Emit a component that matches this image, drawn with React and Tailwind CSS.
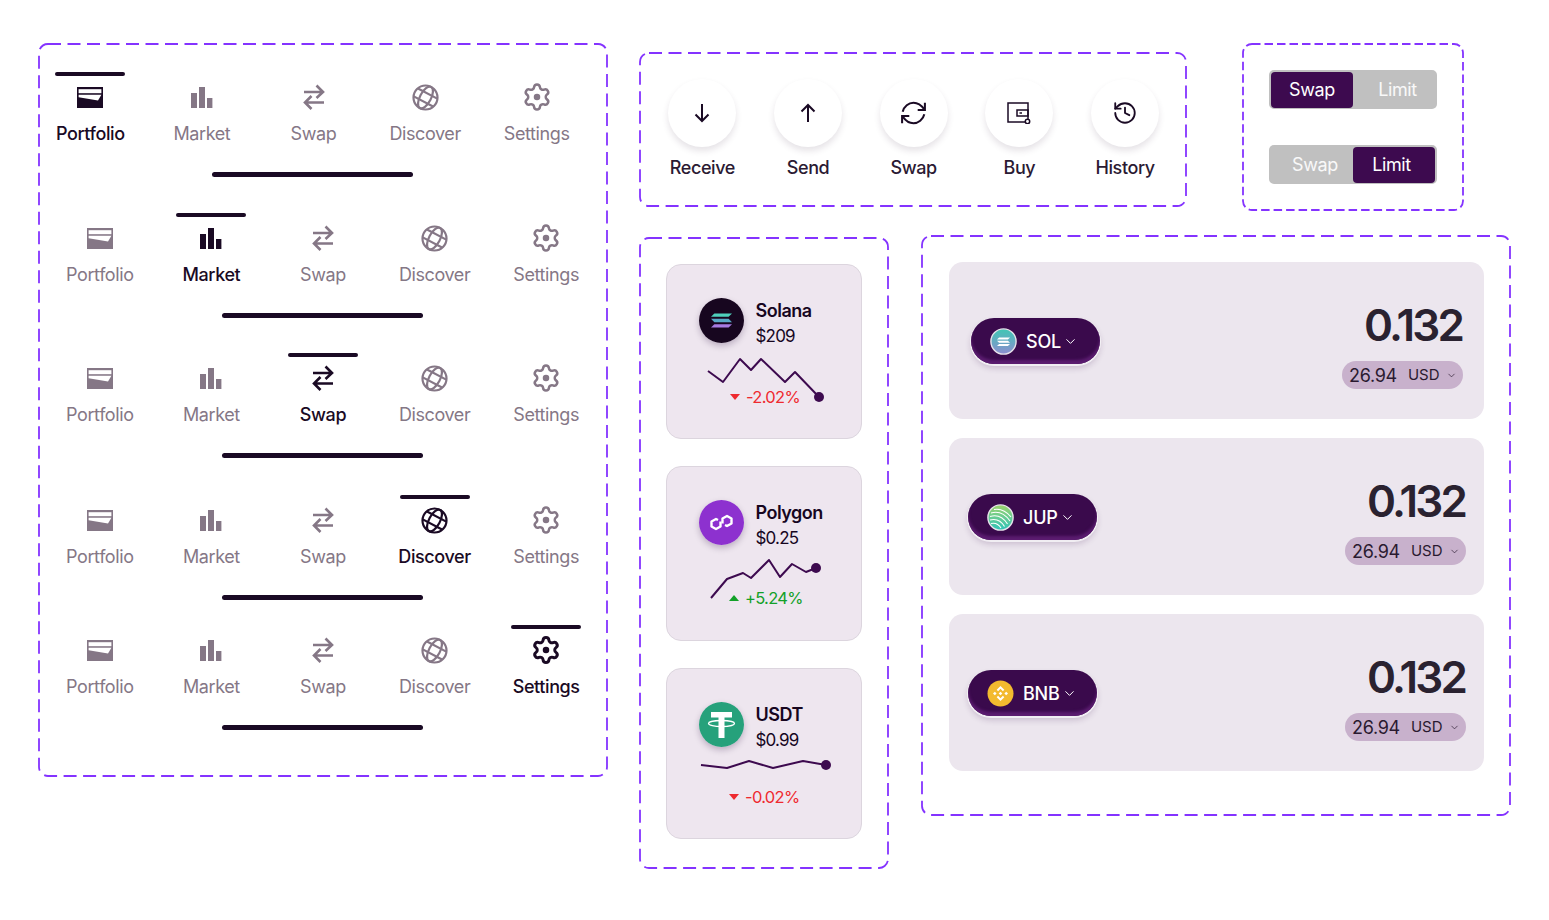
import React from "react";
import { History, ChevronDown } from "lucide-react";

const DARK = "#1a0a24";
const MUTED = "#857786";

function DashedBox({ className, dash = "13 6.5", children }) {
  return (
    <div className={`relative shrink-0 ${className}`}>
      <svg className="absolute inset-0 h-full w-full overflow-visible" fill="none">
        <rect
          x="0"
          y="0"
          width="100%"
          height="100%"
          rx="9"
          stroke="#8433ff"
          strokeWidth="1.8"
          strokeDasharray={dash}
        />
      </svg>
      {children}
    </div>
  );
}

function WalletIcon({ color }) {
  return (
    <svg width="26" height="21" viewBox="0 0 26 21">
      <rect width="26" height="21" fill={color} />
      <rect x="1.6" y="2.2" width="22.8" height="4" fill="#fff" />
      <path d="M1.6 7.8H24.4L21 13.4L1.6 10.2Z" fill="#fff" />
    </svg>
  );
}

function BarsIcon({ color }) {
  return (
    <svg width="22" height="21" viewBox="0 0 22 21" fill={color}>
      <rect x="0" y="6" width="6" height="15" />
      <rect x="8" y="0" width="6" height="21" />
      <rect x="16" y="11" width="5.4" height="10" />
    </svg>
  );
}

function SwapIcon({ color, width = 2.6 }) {
  return (
    <svg width="22" height="26" viewBox="0 0 22 26" fill="none" stroke={color} strokeWidth={width}>
      <path d="M1 8H20M13.5 1.5L20 8L13.5 14" />
      <path d="M21 18.5H2M8.5 12L2 18.5L8.5 25" />
    </svg>
  );
}

function GlobeIcon({ color, width = 2.2 }) {
  return (
    <svg width="27" height="27" viewBox="0 0 27 27" fill="none" stroke={color} strokeWidth={width}>
      <circle cx="13.5" cy="13.5" r="12" />
      <g transform="rotate(28 13.5 13.5)">
        <ellipse cx="13.5" cy="13.5" rx="5.5" ry="12" />
        <path d="M2.6 9H24.4M2.6 18H24.4" />
      </g>
    </svg>
  );
}

function GearIcon({ color }) {
  return (
    <svg
      width="30"
      height="30"
      viewBox="0 0 24 24"
      fill="none"
      stroke={color}
      strokeWidth={color === DARK ? 2.4 : 2}
    >
      <path d="M9.671 4.136a2.34 2.34 0 0 1 4.659 0 2.34 2.34 0 0 0 3.319 1.915 2.34 2.34 0 0 1 2.33 4.033 2.34 2.34 0 0 0 0 3.831 2.34 2.34 0 0 1-2.33 4.033 2.34 2.34 0 0 0-3.319 1.915 2.34 2.34 0 0 1-4.659 0 2.34 2.34 0 0 0-3.32-1.915 2.34 2.34 0 0 1-2.33-4.033 2.34 2.34 0 0 0 0-3.831A2.34 2.34 0 0 1 6.35 6.051a2.34 2.34 0 0 0 3.319-1.915" />
      <circle cx="12" cy="12" r="2.6" fill={color} stroke="none" />
    </svg>
  );
}

const TABS = [
  { label: "Portfolio", Icon: WalletIcon },
  { label: "Market", Icon: BarsIcon },
  { label: "Swap", Icon: SwapIcon },
  { label: "Discover", Icon: GlobeIcon },
  { label: "Settings", Icon: GearIcon },
];

function NavRow({ active, className }) {
  return (
    <div className={`flex w-[558px] flex-col items-center ${className}`}>
      <div className="flex pl-[2px]">
        {TABS.map((tab, i) => {
          const on = i === active;
          return (
            <div key={tab.label} className="flex w-[111.6px] flex-col items-center">
              <div className={`h-1 w-[70px] rounded-full ${on ? "bg-[#1a0a24]" : "bg-transparent"}`} />
              <div className="mt-[7px] flex h-[28px] items-center justify-center">
                <tab.Icon color={on ? DARK : MUTED} />
              </div>
              <span
                className={`mt-[11px] text-[18px] leading-[24px] tracking-[-0.4px] ${
                  on ? "font-medium text-[#1a0a24]" : "text-[#857786]"
                }`}
              >
                {tab.label}
              </span>
            </div>
          );
        })}
      </div>
      <div className="mt-[26px] h-[5px] w-[201px] rounded-full bg-[#1a0a24]" />
    </div>
  );
}

function ReceiveIcon() {
  return (
    <svg width="16" height="20" viewBox="0 0 16 20" fill="none" stroke={DARK} strokeWidth="2">
      <path d="M8 1V18M1.5 11.5L8 18L14.5 11.5" />
    </svg>
  );
}

function SendIcon() {
  return (
    <svg width="16" height="20" viewBox="0 0 16 20" fill="none" stroke={DARK} strokeWidth="2">
      <path d="M8 19V2M1.5 8.5L8 2L14.5 8.5" />
    </svg>
  );
}

function RefreshIcon() {
  return (
    <svg width="29" height="24" viewBox="0 0 24 20" fill="none" stroke={DARK} strokeWidth="1.7">
      <path d="M3 9C4 4.5 8 1.5 12 1.5C15.5 1.5 18.5 3.5 21 7" />
      <path d="M21.5 1.5V7.5H15.5" />
      <path d="M21 11C20 15.5 16 18.5 12 18.5C8.5 18.5 5.5 16.5 3 13" />
      <path d="M2.5 18.5V12.5H8.5" />
    </svg>
  );
}

function BuyIcon() {
  return (
    <svg width="24" height="22" viewBox="0 0 24 22" fill="none" stroke={DARK} strokeWidth="1.5">
      <rect x="1" y="1" width="20" height="19" />
      <rect x="10" y="8" width="11" height="6" />
      <path d="M12.5 11H15" />
      <circle cx="20.5" cy="19.5" r="2.2" fill="#fff" />
    </svg>
  );
}

const ACTIONS = [
  { label: "Receive", icon: <ReceiveIcon /> },
  { label: "Send", icon: <SendIcon /> },
  { label: "Swap", icon: <RefreshIcon /> },
  { label: "Buy", icon: <BuyIcon /> },
  { label: "History", icon: <History size={26} strokeWidth={1.7} color={DARK} /> },
];

function Toggle({ active }) {
  return (
    <div className="flex h-[39px] w-[168px] items-center rounded-[5px] bg-[#c0c0c0] px-[2px] text-[18px] tracking-[-0.4px]">
      {active === 0 ? (
        <>
          <div className="flex h-[36px] w-[82px] items-center justify-center rounded-[4px] bg-[#3d0a4f] text-white">
            Swap
          </div>
          <div className="flex-1 pl-[7px] text-center text-white/90">Limit</div>
        </>
      ) : (
        <>
          <div className="flex-1 pl-[6px] text-center text-white/90">Swap</div>
          <div className="flex h-[36px] w-[82px] items-center justify-center rounded-[4px] bg-[#3d0a4f] pr-[5px] text-white">
            Limit
          </div>
        </>
      )}
    </div>
  );
}

function SolanaStripes({ x, y, w, h, c1, c2, c3 }) {
  const s = h * 0.24;
  const row = (ty, fill, flip) => {
    const a = w * 0.16;
    return flip ? (
      <path d={`M${x + a} ${ty}H${x + w}L${x + w - a} ${ty + s}H${x}Z`} fill={fill} />
    ) : (
      <path d={`M${x} ${ty}H${x + w - a}L${x + w} ${ty + s}H${x + a}Z`} fill={fill} />
    );
  };
  return (
    <>
      {row(y, c1, true)}
      {row(y + h * 0.38, c2, false)}
      {row(y + h * 0.76, c3, true)}
    </>
  );
}

function SolanaLogo() {
  return (
    <svg width="45" height="45" viewBox="0 0 45 45">
      <circle cx="22.5" cy="22.5" r="22.5" fill="#17061f" />
      <SolanaStripes x={12} y={15.5} w={21} h={14} c1="#4fd0bc" c2="#58a9c6" c3="#a77be2" />
    </svg>
  );
}

function PolygonLogo() {
  return (
    <svg width="45" height="45" viewBox="0 0 45 45">
      <circle cx="22.5" cy="22.5" r="22.5" fill="#8d31cf" />
      <g fill="none" stroke="#fff" strokeWidth="2.4" strokeLinejoin="round">
        <path d="M21.5 21.5V26.5L17 29L12.5 26.5V21.5L17 19L19 20" />
        <path d="M23.5 23.5V18.5L28 16L32.5 18.5V23.5L28 26L26 25" />
      </g>
    </svg>
  );
}

function TetherLogo() {
  return (
    <svg width="45" height="45" viewBox="0 0 45 45">
      <circle cx="22.5" cy="22.5" r="22.5" fill="#26a17b" />
      <path d="M12 10H33V15.5H25.5V36H19.5V15.5H12Z" fill="#fff" />
      <ellipse cx="22.5" cy="21.5" rx="13" ry="3" fill="none" stroke="#fff" strokeWidth="1.3" />
    </svg>
  );
}

function Spark({ height, points, end, className }) {
  return (
    <svg className={`block -ml-[1.5px] ${className}`} width="196" height={height} viewBox={`0 0 196 ${height}`} fill="none">
      <polyline points={points} stroke="#3d0a4f" strokeWidth="2" strokeLinejoin="round" />
      <circle cx={end[0]} cy={end[1]} r="5" fill="#3d0a4f" />
    </svg>
  );
}

function Change({ value, up, className }) {
  return (
    <div
      className={`flex items-center text-[16.5px] leading-[22px] tracking-[-0.7px] ${
        up ? "text-[#12a028]" : "text-[#ee2a2f]"
      } ${className}`}
    >
      <svg width="10" height="6" viewBox="0 0 10 6" className="mr-[6px]" fill="currentColor">
        <path d={up ? "M5 0L10 6H0Z" : "M0 0H10L5 6Z"} />
      </svg>
      {value}
    </div>
  );
}

function CoinHead({ logo, name, price }) {
  return (
    <div className="flex items-start pl-[32px]">
      <div className="rounded-full shadow-[0_3px_6px_rgba(40,10,60,0.25)]">{logo}</div>
      <div className="ml-[11.5px] flex flex-col pt-[1px]">
        <span className="text-[18px] font-semibold leading-[24px] tracking-[-0.5px] text-[#17061f]">{name}</span>
        <span className="mt-[1px] text-[17px] leading-[24px] tracking-[-0.8px] text-[#17061f]">{price}</span>
      </div>
    </div>
  );
}

function CoinCard({ className, children }) {
  return (
    <div className={`w-[196px] rounded-[15px] border-[1.5px] border-[#dcd5de] bg-[#eee6ef] ${className}`}>
      {children}
    </div>
  );
}

function SolCoin() {
  return (
    <svg width="27" height="27" viewBox="0 0 27 27">
      <defs>
        <linearGradient id="solg" x1="0" y1="0" x2="0" y2="1">
          <stop offset="0" stopColor="#3fc7b4" />
          <stop offset="1" stopColor="#8d8ed0" />
        </linearGradient>
      </defs>
      <circle cx="13.5" cy="13.5" r="12.6" fill="url(#solg)" stroke="#e7e3ea" strokeWidth="1.4" />
      <SolanaStripes x={7} y={9.5} w={13} h={8.4} c1="#fff" c2="#fff" c3="#fff" />
    </svg>
  );
}

function JupCoin() {
  return (
    <svg width="27" height="27" viewBox="0 0 27 27" fill="none">
      <defs>
        <linearGradient id="jupg" x1="0" y1="0" x2="0" y2="1">
          <stop offset="0" stopColor="#9ed36a" />
          <stop offset="1" stopColor="#2fc4bc" />
        </linearGradient>
      </defs>
      <circle cx="13.5" cy="13.5" r="12.6" fill="url(#jupg)" stroke="#e7e3ea" strokeWidth="1.4" />
      <g stroke="#fff" strokeWidth="1.1">
        <path d="M4 9C11 7 18 10 23 17" />
        <path d="M3 12.5C10 10.5 16 13 20.5 20" />
        <path d="M3 16C9 14.5 14 16.5 17.5 22.5" />
        <path d="M4 19.5C8 18.5 11.5 20 14 24" />
        <path d="M7 5.5C13 4.5 19.5 7.5 24 13" />
      </g>
    </svg>
  );
}

function BnbCoin() {
  return (
    <svg width="27" height="27" viewBox="0 0 27 27">
      <circle cx="13.5" cy="13.5" r="13" fill="#f3ba2f" />
      <g fill="#fff">
        <path d="M13.5 6L17.3 9.8L15.9 11.2L13.5 8.8L11.1 11.2L9.7 9.8Z" />
        <path d="M13.5 21L9.7 17.2L11.1 15.8L13.5 18.2L15.9 15.8L17.3 17.2Z" />
        <path d="M7.8 11.7L9.6 13.5L7.8 15.3L6 13.5Z" />
        <path d="M19.2 11.7L21 13.5L19.2 15.3L17.4 13.5Z" />
        <path d="M13.5 11.7L15.3 13.5L13.5 15.3L11.7 13.5Z" />
      </g>
    </svg>
  );
}

function TokenRow({ coin, symbol, pillPad, rightPad }) {
  return (
    <div className={`flex h-[157px] w-[535px] items-center justify-between rounded-[14px] bg-[#ece6ee] ${pillPad} ${rightPad}`}>
      <div className="mt-[1px] flex h-[46px] w-[129px] items-center rounded-full bg-[#3a0a4c] pl-[19px] text-white shadow-[inset_0_-4px_3px_#5b1c70,0_1px_0_1px_rgba(255,255,255,0.7),0_4px_6px_rgba(60,20,80,0.2)]">
        {coin}
        <span className="ml-[9px] text-[18px] font-medium tracking-[-0.2px]">{symbol}</span>
        <ChevronDown size={15} strokeWidth={1.6} className="ml-[2px]" />
      </div>
      <div className="mt-[8px] flex flex-col items-end">
        <span className="mr-[1px] text-[44px] font-semibold leading-[50px] tracking-[-2.8px] text-[#2a2230]">0.132</span>
        <div className="mt-[11px] flex h-[28px] w-[121px] items-center rounded-full bg-[#c8b1cc] pl-[7px] text-[#2a1a30]">
          <span className="text-[18px] tracking-[-0.3px]">26.94</span>
          <span className="ml-[11px] text-[15px]">USD</span>
          <ChevronDown size={11} strokeWidth={1.5} className="ml-[6px]" />
        </div>
      </div>
    </div>
  );
}

export default function App() {
  return (
    <div className="flex h-[920px] w-[1549px] items-start overflow-hidden bg-white pl-[39px] pt-[44px] font-['Inter',sans-serif]">
      <DashedBox className="flex h-[732px] w-[568px] flex-col items-start px-[4px] pt-[28px]">
        <NavRow active={0} className="-ml-[9.5px]" />
        <NavRow active={1} className="mt-[36px]" />
        <NavRow active={2} className="mt-[35px]" />
        <NavRow active={3} className="mt-[37px]" />
        <NavRow active={4} className="mt-[25px]" />
      </DashedBox>

      <div className="ml-[33px] flex flex-col">
        <div className="flex items-start">
          <DashedBox className="mt-[9px] flex h-[153px] w-[546px] pl-[9.5px] pt-[26px]">
            {ACTIONS.map((a) => (
              <div key={a.label} className="flex w-[105.7px] flex-col items-center">
                <div className="flex h-[68px] w-[68px] items-center justify-center rounded-full bg-white shadow-[0_4px_6px_rgba(60,40,70,0.13)]">
                  {a.icon}
                </div>
                <span className="mt-[10px] text-[18px] font-medium leading-[22px] tracking-[-0.4px] text-[#2b1a33]">
                  {a.label}
                </span>
              </div>
            ))}
          </DashedBox>
          <DashedBox
            className="ml-[57px] flex h-[166px] w-[220px] flex-col gap-[36px] pl-[26px] pt-[26px]"
            dash="8.5 4"
          >
            <Toggle active={0} />
            <Toggle active={1} />
          </DashedBox>
        </div>

        <div className="mt-[26px] flex items-start">
          <DashedBox className="mt-[2px] flex h-[630px] w-[248px] flex-col pl-[26px] pt-[26px]">
            <CoinCard className="h-[175px] pt-[33px]">
              <CoinHead logo={<SolanaLogo />} name="Solana" price="$209" />
              <Spark
                height={60}
                className="mt-[2px]"
                points="42,21 57,32 74,9 85,20 95,9 119,32 129,22 153,47"
                end={[153, 47]}
              />
              <Change value="-2.02%" className="-mt-[24px] pl-[63px]" />
            </CoinCard>
            <CoinCard className="mt-[27px] h-[175px] pt-[33px]">
              <CoinHead logo={<PolygonLogo />} name="Polygon" price="$0.25" />
              <Spark
                height={50}
                className="mt-[4.5px]"
                points="45,43 61,24 77,18 85,23 103,5 114,22 126,9 140,17 150,13"
                end={[150, 13]}
              />
              <Change value="+5.24%" up className="-mt-[17.5px] pl-[62px]" />
            </CoinCard>
            <CoinCard className="mt-[27px] h-[171px] pt-[33px]">
              <CoinHead logo={<TetherLogo />} name="USDT" price="$0.99" />
              <Spark
                height={25}
                className="mt-[2.5px]"
                points="35,10 61,13 83,6 107,13 137,6 160,10"
                end={[160, 10]}
              />
              <Change value="-0.02%" className="mt-[6.5px] pl-[62px]" />
            </CoinCard>
          </DashedBox>

          <DashedBox className="ml-[34px] flex h-[579px] w-[588px] flex-col gap-[19px] pl-[27px] pt-[26px]">
            <TokenRow coin={<SolCoin />} symbol="SOL" pillPad="pl-[22px]" rightPad="pr-[21px]" />
            <TokenRow coin={<JupCoin />} symbol="JUP" pillPad="pl-[19px]" rightPad="pr-[18px]" />
            <TokenRow coin={<BnbCoin />} symbol="BNB" pillPad="pl-[19px]" rightPad="pr-[18px]" />
          </DashedBox>
        </div>
      </div>
    </div>
  );
}
